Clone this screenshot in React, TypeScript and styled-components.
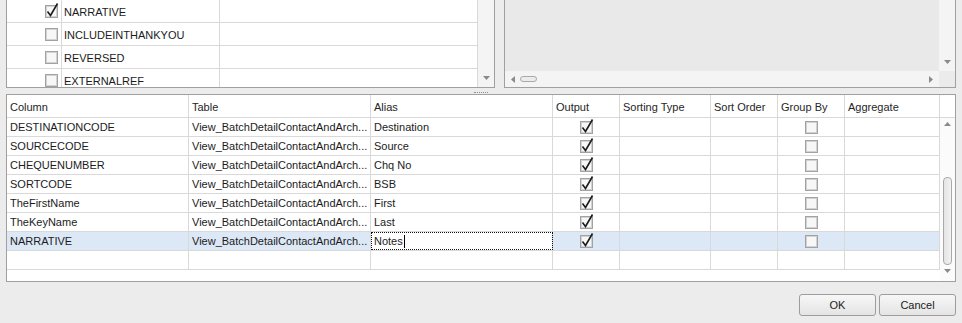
import React from 'react';
import styled, { createGlobalStyle } from 'styled-components';

const GlobalStyle = createGlobalStyle`
  html, body {
    margin: 0;
    padding: 0;
    background: #ececec;
  }
  body {
    font-family: "Liberation Sans", Arial, sans-serif;
    font-size: 11px;
    color: #1b1b1b;
  }
`;

const GRID_LINE = '#d9d9d9';
const FRAME = '#a0a0a0';

type ColumnDef = { title: string; width: number };

const columns: ColumnDef[] = [
  { title: 'Column', width: 182 },
  { title: 'Table', width: 182 },
  { title: 'Alias', width: 182 },
  { title: 'Output', width: 67 },
  { title: 'Sorting Type', width: 91 },
  { title: 'Sort Order', width: 67 },
  { title: 'Group By', width: 67 },
  { title: 'Aggregate', width: 95 },
];

type QueryRow = { column: string; alias: string; selected?: boolean; editing?: boolean };

const queryRows: QueryRow[] = [
  { column: 'DESTINATIONCODE', alias: 'Destination' },
  { column: 'SOURCECODE', alias: 'Source' },
  { column: 'CHEQUENUMBER', alias: 'Chq No' },
  { column: 'SORTCODE', alias: 'BSB' },
  { column: 'TheFirstName', alias: 'First' },
  { column: 'TheKeyName', alias: 'Last' },
  { column: 'NARRATIVE', alias: 'Notes', selected: true, editing: true },
];

const fields = [
  { name: 'NARRATIVE', checked: true },
  { name: 'INCLUDEINTHANKYOU', checked: false },
  { name: 'REVERSED', checked: false },
  { name: 'EXTERNALREF', checked: false },
];

const template = columns.map((c) => `${c.width}px`).join(' ');

const Page = styled.div`
  width: 962px;
  height: 323px;
  display: flex;
  flex-direction: column;
  padding: 0 6px;
  box-sizing: border-box;
  overflow: hidden;
`;

const TopArea = styled.div`
  display: flex;
  gap: 9px;
  height: 88px;
  flex-shrink: 0;
`;

const FieldPanel = styled.div`
  width: 489px;
  box-sizing: border-box;
  border: 1px solid ${FRAME};
  border-top: none;
  background: #fff;
  display: flex;
  overflow: hidden;
`;

const FieldList = styled.div`
  width: 471px;
  display: flex;
  flex-direction: column;
`;

const FieldRow = styled.div`
  display: grid;
  grid-template-columns: 55px 158px 258px;
  height: 23px;
  flex-shrink: 0;
  box-sizing: border-box;
  border-bottom: 1px solid ${GRID_LINE};
`;

const FieldCell = styled.div`
  display: flex;
  align-items: center;
  padding: 1px 0 0 2px;
  border-right: 1px solid ${GRID_LINE};
  box-sizing: border-box;
  white-space: nowrap;
  overflow: hidden;
`;

const FieldCheckCell = styled.div`
  display: flex;
  align-items: center;
  justify-content: flex-end;
  padding-right: 3px;
  border-right: 1px solid ${GRID_LINE};
`;

const ScrollTrack = styled.div`
  width: 16px;
  flex-shrink: 0;
  background: #f4f4f4;
  display: flex;
  flex-direction: column;
  align-items: center;
`;

const PreviewPanel = styled.div`
  width: 452px;
  box-sizing: border-box;
  border: 1px solid ${FRAME};
  border-top: none;
  display: grid;
  grid-template-columns: 1fr 16px;
  grid-template-rows: 1fr 16px;
`;

const PreviewArea = styled.div`
  background: #e9e9e9;
`;

const HScroll = styled.div`
  background: #f4f4f4;
  display: flex;
  align-items: center;
  padding: 0 6px 0 6px;
  gap: 5px;
`;

const Corner = styled.div`
  background: #ebebeb;
`;

const HThumb = styled.div`
  width: 15px;
  height: 4px;
  border: 1px solid #a9a9a9;
  border-radius: 3px;
  background: #ececec;
`;

const Spacer = styled.div`
  flex: 1;
`;

const Splitter = styled.div`
  height: 6px;
  flex-shrink: 0;
  display: flex;
  justify-content: center;
  align-items: flex-end;
`;

const Grip = styled.div`
  width: 14px;
  height: 0;
  border-top: 1px dotted #8c8c8c;
  margin-bottom: 1px;
`;

const QueryGrid = styled.div`
  height: 188px;
  flex-shrink: 0;
  box-sizing: border-box;
  border: 1px solid ${FRAME};
  background: #fff;
  display: flex;
  flex-direction: column;
`;

const HeaderRow = styled.div`
  display: grid;
  grid-template-columns: ${template} 1fr;
  height: 23px;
  box-sizing: border-box;
  border-bottom: 1px solid ${GRID_LINE};
  color: #262626;
`;

const HeaderCell = styled.div<{ $last?: boolean }>`
  display: flex;
  align-items: center;
  padding: 2px 0 0 3px;
  box-sizing: border-box;
  border-right: ${({ $last }) => ($last ? 'none' : `1px solid ${GRID_LINE}`)};
  white-space: nowrap;
`;

const GridBody = styled.div`
  flex: 1;
  display: flex;
  min-height: 0;
`;

const RowList = styled.div`
  width: 933px;
  display: flex;
  flex-direction: column;
`;

const DataRow = styled.div<{ $selected?: boolean }>`
  display: grid;
  grid-template-columns: ${template};
  height: 19px;
  flex-shrink: 0;
  box-sizing: border-box;
  border-bottom: 1px solid ${GRID_LINE};
  background: ${({ $selected }) => ($selected ? '#dde8f6' : '#fff')};
`;

const DataCell = styled.div<{ $center?: boolean; $editing?: boolean }>`
  display: flex;
  align-items: center;
  justify-content: ${({ $center }) => ($center ? 'center' : 'flex-start')};
  padding-left: ${({ $center }) => ($center ? '0' : '3px')};
  box-sizing: border-box;
  border-right: 1px solid ${GRID_LINE};
  white-space: nowrap;
  overflow: hidden;
  ${({ $editing }) =>
    $editing
      ? `
    background: #fff;
    outline: 1px dotted #111;
    outline-offset: -1px;
  `
      : ''}
`;

const Caret = styled.span`
  display: inline-block;
  width: 1px;
  height: 13px;
  background: #000;
  margin-left: 1px;
`;

const VScroll = styled.div`
  width: 15px;
  background: #fbfbfb;
  display: flex;
  flex-direction: column;
  align-items: center;
  padding: 4px 0 6px;
  box-sizing: border-box;
`;

const VThumb = styled.div`
  width: 7px;
  height: 86px;
  margin: 51px 0 4px;
  border: 1px solid #a9a9a9;
  border-radius: 4px;
  background: linear-gradient(to right, #e4e4e4, #f2f2f2);
`;

const Buttons = styled.div`
  display: flex;
  justify-content: flex-end;
  gap: 3px;
  margin-top: 12px;
`;

const Button = styled.button`
  width: 77px;
  height: 22px;
  box-sizing: border-box;
  border: 1px solid #9d9d9d;
  border-radius: 3px;
  background: linear-gradient(to bottom, #f7f7f7, #e4e4e4);
  font-family: "Liberation Sans", Arial, sans-serif;
  font-size: 11px;
  color: #1b1b1b;
  padding: 0;
`;

const DownArrowWrap = styled.div<{ $bottom: number }>`
  margin-bottom: ${({ $bottom }) => $bottom}px;
`;

const CheckBox = ({ checked }: { checked: boolean }) => (
  <svg width="13" height="13" viewBox="0 0 13 13" style={{ display: 'block', overflow: 'visible' }}>
    <rect x="0.5" y="0.5" width="12" height="12" fill="#f3f3f3" stroke="#a2a2a2" />
    <rect x="1.5" y="1.5" width="10" height="10" fill="#f7f7f7" stroke="#d2d2d2" />
    {checked && <path d="M2.5 6.5 L5.5 10.5 L12.5 -1.5" fill="none" stroke="#1c1c1c" strokeWidth="1.6" />}
  </svg>
);

const Arrow = ({ dir }: { dir: 'up' | 'down' | 'left' | 'right' }) => {
  const paths = {
    up: 'M0 4 L3.5 0 L7 4 Z',
    down: 'M0 0 L7 0 L3.5 4 Z',
    left: 'M4 0 L4 7 L0 3.5 Z',
    right: 'M0 0 L4 3.5 L0 7 Z',
  };
  const horizontal = dir === 'left' || dir === 'right';
  return (
    <svg width={horizontal ? 4 : 7} height={horizontal ? 7 : 4} style={{ display: 'block' }}>
      <path d={paths[dir]} fill="#8a8a8a" />
    </svg>
  );
};

export default function App() {
  return (
    <>
      <GlobalStyle />
      <Page>
        <TopArea>
          <FieldPanel>
            <FieldList>
              {fields.map((f) => (
                <FieldRow key={f.name}>
                  <FieldCheckCell>
                    <CheckBox checked={f.checked} />
                  </FieldCheckCell>
                  <FieldCell>{f.name}</FieldCell>
                  <FieldCell />
                </FieldRow>
              ))}
            </FieldList>
            <ScrollTrack>
              <Spacer />
              <DownArrowWrap $bottom={7}>
                <Arrow dir="down" />
              </DownArrowWrap>
            </ScrollTrack>
          </FieldPanel>
          <PreviewPanel>
            <PreviewArea />
            <ScrollTrack>
              <Spacer />
              <DownArrowWrap $bottom={7}>
                <Arrow dir="down" />
              </DownArrowWrap>
            </ScrollTrack>
            <HScroll>
              <Arrow dir="left" />
              <HThumb />
              <Spacer />
              <Arrow dir="right" />
            </HScroll>
            <Corner />
          </PreviewPanel>
        </TopArea>

        <Splitter>
          <Grip />
        </Splitter>

        <QueryGrid>
          <HeaderRow>
            {columns.map((c) => (
              <HeaderCell key={c.title}>{c.title}</HeaderCell>
            ))}
            <HeaderCell $last />
          </HeaderRow>
          <GridBody>
            <RowList>
              {queryRows.map((r) => (
                <DataRow key={r.column} $selected={r.selected}>
                  <DataCell>{r.column}</DataCell>
                  <DataCell>View_BatchDetailContactAndArch...</DataCell>
                  <DataCell $editing={r.editing}>
                    {r.alias}
                    {r.editing && <Caret />}
                  </DataCell>
                  <DataCell $center>
                    <CheckBox checked />
                  </DataCell>
                  <DataCell />
                  <DataCell />
                  <DataCell $center>
                    <CheckBox checked={false} />
                  </DataCell>
                  <DataCell />
                </DataRow>
              ))}
              <DataRow>
                {columns.map((c) => (
                  <DataCell key={c.title} />
                ))}
              </DataRow>
            </RowList>
            <VScroll>
              <Arrow dir="up" />
              <VThumb />
              <Arrow dir="down" />
            </VScroll>
          </GridBody>
        </QueryGrid>

        <Buttons>
          <Button>OK</Button>
          <Button>Cancel</Button>
        </Buttons>
      </Page>
    </>
  );
}
